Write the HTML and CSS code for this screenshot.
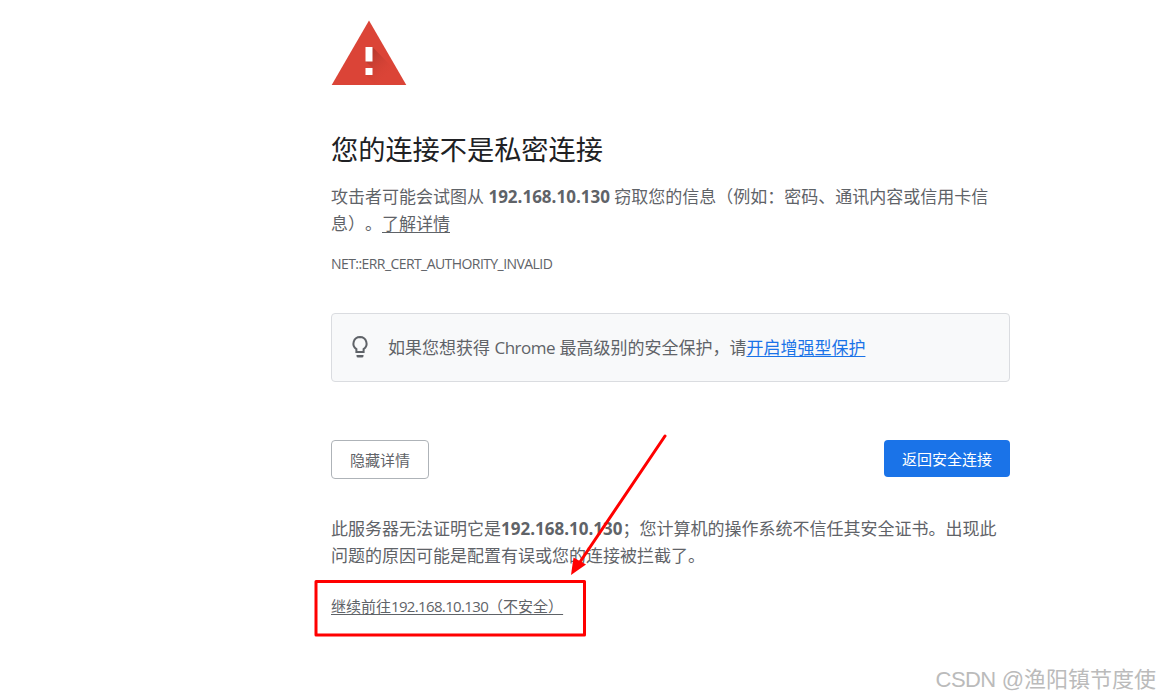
FILE: index.html
```html
<!DOCTYPE html>
<html lang="zh-CN">
<head>
    <meta charset="UTF-8">
    <meta name="viewport" content="width=device-width, initial-scale=1.0">
    <title>隐私设置错误</title>
    <link rel="stylesheet" href="styles.css">
</head>
<body>

    <div class="container">
        <svg class="warning-icon" width="76" height="66" viewBox="0 0 76 66">
            <defs>
                <linearGradient id="shade" gradientUnits="userSpaceOnUse" x1="36" y1="38" x2="56" y2="58">
                    <stop offset="0" stop-color="#b5382d" stop-opacity="0.9"/>
                    <stop offset="1" stop-color="#db4437" stop-opacity="0"/>
                </linearGradient>
            </defs>
            <path d="M38 0.5L75.3 65H0.7z" fill="#db4437"/>
            <path d="M41.5 27L60 46L70 65H44.500L34.5 55L41.500 48L34.500 41.500z" fill="url(#shade)"/>
            <path d="M34.5 27h7v14.5h-7zM34.5 48h7v7h-7z" fill="#fff"/>
        </svg>

        <h1>您的连接不是私密连接</h1>
        <p class="message">攻击者可能会试图从 <strong>192.168.10.130</strong> 窃取您的信息（例如：密码、通讯内容或信用卡信<br>息）。<a class="link" href="#">了解详情</a></p>
        <div class="error-code">NET::ERR_CERT_AUTHORITY_INVALID</div>

        <div class="tip-box">
            <svg class="bulb-icon" width="18" height="24" viewBox="0 0 18 24">
                <path d="M9 2a6.6 6.6 0 0 0-3.6 12.1V17h7.2v-2.9A6.6 6.6 0 0 0 9 2z" fill="none" stroke="#5f6368" stroke-width="2"/>
                <path d="M5.5 20h7v1a1.5 1.5 0 0 1-1.5 1.5H7A1.5 1.5 0 0 1 5.5 21z" fill="#5f6368"/>
            </svg>
            <p>如果您想获得 <span class="latin">Chrome</span> 最高级别的安全保护，请<a class="link blue" href="#">开启增强型保护</a></p>
        </div>

        <div class="buttons">
            <button class="button details-button">隐藏详情</button>
            <button class="button primary-button">返回安全连接</button>
        </div>

        <p class="details">此服务器无法证明它是<strong>192.168.10.130</strong>；您计算机的操作系统不信任其安全证书。出现此<br>问题的原因可能是配置有误或您的连接被拦截了。</p>
        <a class="link proceed" href="#">继续前往<span class="ip">192.168.10.130</span>（不安全）</a>
    </div>

    <!-- 红框和箭头标注 -->
    <svg class="annotation" width="1160" height="699" viewBox="0 0 1160 699">
        <rect x="316" y="581.5" width="268.5" height="53.5" fill="none" stroke="#f00" stroke-width="3" stroke-linejoin="round"/>
        <path d="M665 436L580 562" stroke="#f00" stroke-width="3" stroke-linecap="round"/>
        <path d="M571 575L573.5 557.500L586 564.5z" fill="#f00"/>
    </svg>

    <div class="watermark"><span class="site">CSDN</span> @渔阳镇节度使</div>

</body>
</html>
```

FILE: styles.css
```css
body {
    margin: 0;
    height: 699px;
    overflow: hidden;
    background: #fff;
    color: #5f6368;
    font-family: 'Open Sans', 'Noto Sans CJK SC', sans-serif;
    font-size: 17px;
    line-height: 27px;
    text-spacing-trim: space-all;
}

.container {
    width: 679px;
    margin-left: 331px;
    padding-top: 20px;
    white-space: nowrap;
}

.warning-icon {
    display: block;
}

h1 {
    margin: 45px 0 0;
    color: #202124;
    font-size: 27.2px;
    font-weight: 400;
    line-height: 37px;
}

p {
    margin: 0;
}

.message {
    margin-top: 15px;
}

.link {
    color: #5f6368;
    text-decoration: underline;
    text-decoration-thickness: 1px;
    text-underline-offset: 2px;
}

.blue {
    color: #1a73e8;
}

.error-code {
    margin-top: 17px;
    font-size: 14px;
    line-height: 20px;
    letter-spacing: -0.57px;
}

/* 安全保护提示 */
.tip-box {
    display: flex;
    align-items: center;
    box-sizing: border-box;
    height: 69px;
    margin-top: 39px;
    padding-left: 19px;
    background: #f8f9fa;
    border: 1px solid #dadce0;
    border-radius: 4px;
}

.bulb-icon {
    margin-right: 19px;
    margin-bottom: 2px;
}

.latin {
    letter-spacing: -0.5px;
}

.buttons {
    display: flex;
    justify-content: space-between;
    align-items: flex-start;
    margin-top: 58px;
}

.button {
    box-sizing: border-box;
    padding: 0;
    border-radius: 4px;
    font-family: inherit;
    font-size: 15px;
    cursor: pointer;
}

.details-button {
    width: 98px;
    height: 39px;
    background: #fff;
    border: 1px solid #aeb3b8;
    color: #5f6368;
}

.primary-button {
    width: 126px;
    height: 37px;
    background: #1a73e8;
    border: none;
    color: #fff;
}

.details {
    margin-top: 36px;
}

.proceed {
    display: inline-block;
    margin-top: 24px;
    font-size: 15px;
}

.ip {
    letter-spacing: -0.65px;
}

/* 标注层 */
.annotation {
    position: absolute;
    top: 0;
    left: 0;
    pointer-events: none;
}

.watermark {
    position: absolute;
    right: 4px;
    bottom: 3px;
    color: #bbb;
    font-family: 'Liberation Sans', 'Noto Sans CJK SC', sans-serif;
    font-size: 22px;
    line-height: 32px;
    white-space: nowrap;
}

.site {
    letter-spacing: -0.6px;
}
```
